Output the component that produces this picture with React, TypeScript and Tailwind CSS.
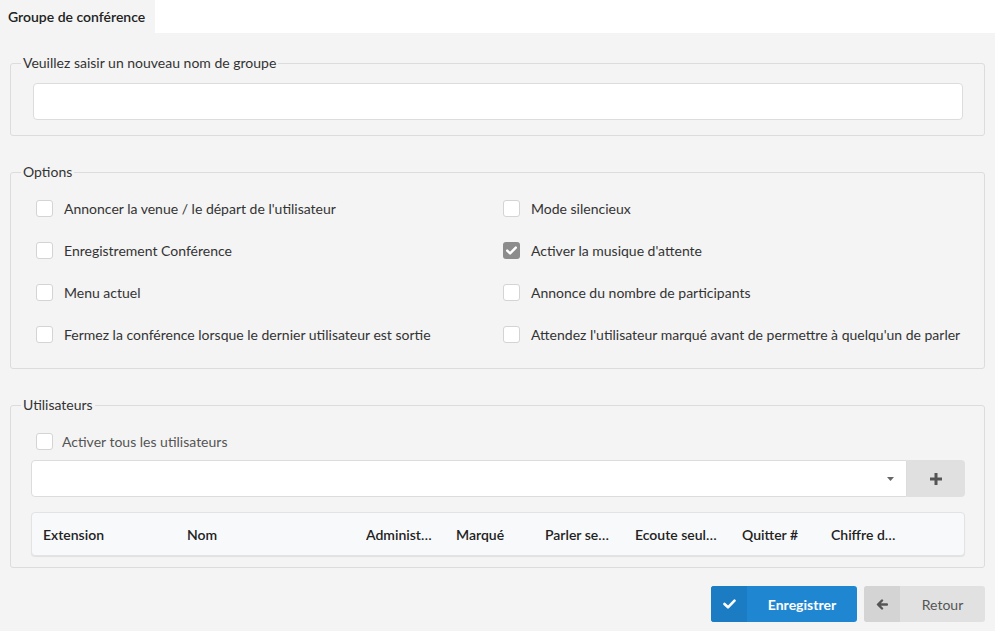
import React from "react";

const Box = ({ checked = false }: { checked?: boolean }) =>
  checked ? (
    <span className="flex h-[17px] w-[17px] shrink-0 items-center justify-center rounded-[3px] bg-[#8c8c8c]">
      <svg width="11" height="9" viewBox="0 0 11 9">
        <path d="M1.2 4.6 L4.1 7.4 L9.8 1.6" fill="none" stroke="#fff" strokeWidth="2.4" strokeLinecap="round" strokeLinejoin="round" />
      </svg>
    </span>
  ) : (
    <span className="block h-[17px] w-[17px] shrink-0 rounded-[3px] border border-[#d4d4d4] bg-white" />
  );

const Opt = ({ label, checked }: { label: string; checked?: boolean }) => (
  <div className="flex h-[42px] items-center gap-[11px]">
    <Box checked={checked} />
    <span>{label}</span>
  </div>
);

export default function App() {
  const cols: [string, string][] = [
    ["Extension", "w-[144px]"],
    ["Nom", "w-[179px]"],
    ["Administ…", "w-[90px]"],
    ["Marqué", "w-[89px]"],
    ["Parler se…", "w-[90px]"],
    ["Ecoute seul…", "w-[107px]"],
    ["Quitter #", "w-[89px]"],
    ["Chiffre d…", "w-[80px]"],
  ];
  return (
    <div
      className="min-h-[631px] w-[995px] bg-[#f4f4f4] text-[14px] text-[#333]"
      style={{ fontFamily: "Lato, 'Open Sans', sans-serif" }}
    >
      <div className="flex h-[33px] bg-white">
        <div className="flex w-[155px] items-center bg-[#f4f4f4] pl-[8px] font-semibold text-[#222]">
          Groupe de conférence
        </div>
      </div>

      <div className="px-[10px]">
        <fieldset className="mt-[20px] rounded-[3px] border border-[#dcdcdc] pl-[22px] pr-[21px] pb-[15px] pt-[10px]">
          <legend className="ml-[-12px] px-[2px] leading-[20px] text-[#333]">Veuillez saisir un nouveau nom de groupe</legend>
          <div className="h-[37px] rounded-[4px] border border-[#dcdcdc] bg-white" />
        </fieldset>

        <fieldset className="mt-[26px] rounded-[3px] border border-[#dcdcdc] pb-[13px] pl-[25px] pr-[20px] pt-[5px]">
          <legend className="ml-[-15px] px-[2px] leading-[20px]">Options</legend>
          <div className="grid grid-cols-[467px_1fr]">
            <Opt label="Annoncer la venue / le départ de l'utilisateur" />
            <Opt label="Mode silencieux" />
            <Opt label="Enregistrement Conférence" />
            <Opt label="Activer la musique d'attente" checked />
            <Opt label="Menu actuel" />
            <Opt label="Annonce du nombre de participants" />
            <Opt label="Fermez la conférence lorsque le dernier utilisateur est sortie" />
            <Opt label="Attendez l'utilisateur marqué avant de permettre à quelqu'un de parler" />
          </div>
        </fieldset>

        <fieldset className="mt-[26px] rounded-[3px] border border-[#dcdcdc] pb-[11px] pl-[20px] pr-[19px] pt-0">
          <legend className="ml-[-10px] px-[2px] leading-[20px]">Utilisateurs</legend>
          <div className="mt-[16px] flex h-[20px] items-center gap-[9px] pl-[5px] text-[#555]">
            <Box />
            <span>Activer tous les utilisateurs</span>
          </div>
          <div className="mt-[9px] flex h-[37px]">
            <div className="flex flex-1 items-center justify-end rounded-l-[4px] border border-[#dcdcdc] bg-white pr-[12px]">
              <svg width="7" height="4" viewBox="0 0 7 4"><path d="M0 0 H7 L3.5 4 Z" fill="#666" /></svg>
            </div>
            <div className="flex w-[58px] items-center justify-center rounded-r-[4px] bg-[#e0e0e0]">
              <svg width="14" height="14" viewBox="0 0 14 14">
                <path d="M7 1 V13 M1 7 H13" stroke="#555" strokeWidth="3" />
              </svg>
            </div>
          </div>
          <div className="mt-[15px] flex h-[44px] items-center rounded-[4px] border border-[#e3e3e3] bg-[#f8f9fa] pl-[11px] font-semibold text-[#222] shadow-[0_1px_1px_rgba(0,0,0,0.08)]">
            {cols.map(([c, w]) => (
              <div key={c} className={`${w} shrink-0 truncate`}>{c}</div>
            ))}
          </div>
        </fieldset>

        <div className="mt-[18px] flex justify-end gap-[7px]">
          <button className="flex h-[36px] w-[146px] overflow-hidden rounded-[3px] bg-[#1f87d2] font-bold text-white">
            <span className="flex h-full w-[36px] items-center justify-center bg-[#1b7cc4]">
              <svg width="13" height="10" viewBox="0 0 13 10">
                <path d="M1.5 5 L5 8.3 L11.5 1.7" fill="none" stroke="#fff" strokeWidth="2.6" strokeLinecap="round" strokeLinejoin="round" />
              </svg>
            </span>
            <span className="flex flex-1 items-center justify-center">Enregistrer</span>
          </button>
          <button className="flex h-[36px] w-[121px] overflow-hidden rounded-[3px] bg-[#e1e1e1] text-[#555]">
            <span className="flex h-full w-[36px] items-center justify-center bg-[#d4d4d4]">
              <svg width="12" height="11" viewBox="0 0 12 11">
                <path d="M11 5.5 H2.5 M6 1.5 L2 5.5 L6 9.5" fill="none" stroke="#555" strokeWidth="2.4" strokeLinecap="round" strokeLinejoin="round" />
              </svg>
            </span>
            <span className="flex flex-1 items-center justify-center">Retour</span>
          </button>
        </div>
      </div>
    </div>
  );
}
